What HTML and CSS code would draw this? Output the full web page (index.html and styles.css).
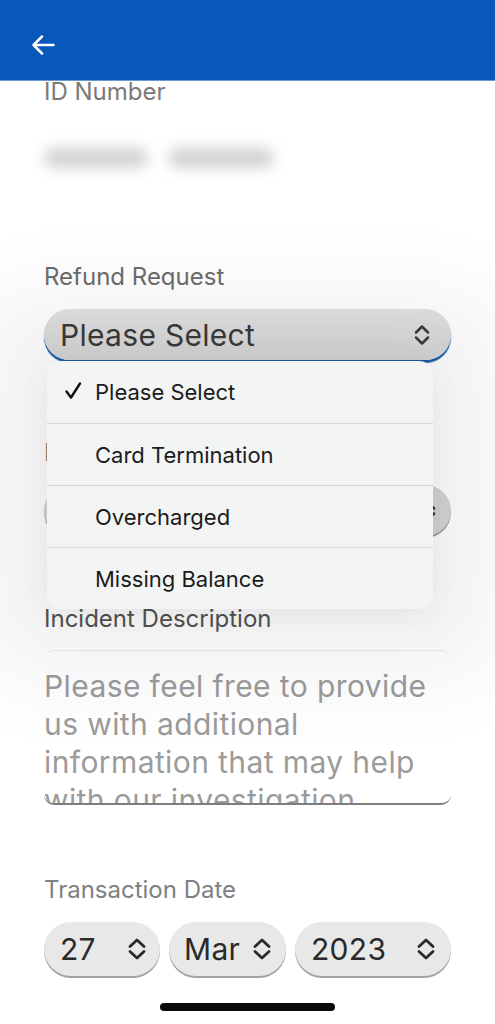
FILE: index.html
```html
<!doctype html>
<html>
<head>
<title>Refund Request</title>
<meta name="viewport" content="width=device-width, initial-scale=1">
<link rel="stylesheet" href="styles.css">
</head>
<body>
<header class="topbar">
	<button class="back" aria-label="Back">
		<svg width="26" height="26" viewBox="0 0 26 26"><path d="M23.5 13H3.5M12 4.5L3.5 13 12 21.5" fill="none" stroke="#fff" stroke-width="2.5" stroke-linecap="round" stroke-linejoin="round"/></svg>
	</button>
</header>

<main class="form">
	<div class="field field-id">
		<label class="label">ID Number</label>
		<div class="blurred"><span class="blob blob-a"></span><span class="blob blob-b"></span></div>
	</div>

	<div class="field field-refund">
		<label class="label">Refund Request</label>
		<div class="select select-wide select-focus">
			<span>Please Select</span>
			<svg class="chev" width="16" height="24" viewBox="0 0 16 24"><path d="M2 9.5L8 3.5l6 6M2 14.5l6 6 6-6" fill="none" stroke="#3a3a3a" stroke-width="2.5" stroke-linecap="round" stroke-linejoin="round"/></svg>
		</div>
		<ul class="menu">
			<li><svg class="tick" width="18" height="18" viewBox="0 0 18 18"><path d="M2.5 9.5L7 15.5 16 1.5" fill="none" stroke="#111" stroke-width="2.4" stroke-linecap="round" stroke-linejoin="round"/></svg>Please Select</li>
			<li>Card Termination</li>
			<li>Overcharged</li>
			<li>Missing Balance</li>
		</ul>
	</div>

	<div class="field field-hidden">
		<label class="label">Bank Account</label>
		<div class="select select-wide select-under">
			<span>Please Select</span>
			<svg class="chev" width="16" height="24" viewBox="0 0 16 24"><path d="M2 9.5L8 3.5l6 6M2 14.5l6 6 6-6" fill="none" stroke="#333" stroke-width="2.5" stroke-linecap="round" stroke-linejoin="round"/></svg>
		</div>
	</div>

	<div class="field field-desc">
		<label class="label">Incident Description</label>
		<div class="textarea">Please feel free to provide us with additional information that may help with our investigation</div>
	</div>

	<div class="field field-date">
		<label class="label">Transaction Date</label>
		<div class="date-row">
			<div class="select pill pill-day"><span>27</span><svg class="chev" width="20" height="24" viewBox="0 0 20 24"><path d="M3 9.5l7-6.5 7 6.5M3 14.5l7 6.5 7-6.5" fill="none" stroke="#2a2a2a" stroke-width="2.8" stroke-linecap="round" stroke-linejoin="round"/></svg></div>
			<div class="select pill pill-month"><span>Mar</span><svg class="chev" width="20" height="24" viewBox="0 0 20 24"><path d="M3 9.5l7-6.5 7 6.5M3 14.5l7 6.5 7-6.5" fill="none" stroke="#2a2a2a" stroke-width="2.8" stroke-linecap="round" stroke-linejoin="round"/></svg></div>
			<div class="select pill pill-year"><span>2023</span><svg class="chev" width="20" height="24" viewBox="0 0 20 24"><path d="M3 9.5l7-6.5 7 6.5M3 14.5l7 6.5 7-6.5" fill="none" stroke="#2a2a2a" stroke-width="2.8" stroke-linecap="round" stroke-linejoin="round"/></svg></div>
		</div>
	</div>
</main>

<div class="home-indicator"></div>
</body>
</html>
```

FILE: styles.css
```css
* {
  box-sizing: border-box;
}
html, body {
  margin: 0;
  padding: 0;
}
body {
  width: 495px;
  height: 1024px;
  overflow: hidden;
  background: #fff;
  font-family: Inter, "Liberation Sans", sans-serif;
  position: relative;
}
.topbar {
  height: 81px;
  background: #0758ba;
  display: flex;
  align-items: center;
  padding-left: 30px;
  border-bottom: 1px solid #6d99d2;
}
.back {
  background: none;
  border: 0;
  padding: 0;
  display: flex;
  margin-top: 10px;
}
.form {
  padding: 0 44px;
}
.field {
  position: relative;
}
.label {
  display: block;
  font-size: 24px;
  line-height: 30px;
  color: #7a7a7a;
}
.field-id {
  margin-top: -4px;
}
.blurred {
  margin-top: 41px;
  display: flex;
  gap: 20px;
  height: 24px;
}
.blob {
  display: block;
  height: 20px;
  border-radius: 10px;
  background: #d2d2d2;
  filter: blur(7px);
}
.blob-a {
  width: 104px;
}
.blob-b {
  width: 106px;
}
.field-refund {
  margin-top: 90px;
  z-index: 2;
}
.field-refund .label {
  color: #6c6c6c;
}
.select {
  display: flex;
  align-items: center;
  justify-content: space-between;
  height: 51px;
  border-radius: 26px;
  background: #e3e3e3;
  color: #3a3a3a;
  font-size: 30px;
  letter-spacing: 0.3px;
  padding: 0 21px 0 16px;
  box-shadow: 0 2px 0 #a2a2a2;
}
.select-wide {
  margin-top: 17px;
}
.select-focus {
  background: linear-gradient(#e2e2e2, #d5d5d5);
  box-shadow: 0 3px 1px #1e5cad;
}
.select-under {
  padding-right: 15px;
  background: #d6d6d6;
}
.menu {
  position: absolute;
  top: 99px;
  left: 3px;
  width: 386px;
  margin: 0;
  padding: 0;
  list-style: none;
  background: #f3f4f4;
  border-radius: 14px;
  box-shadow: 0 0 90px 70px rgba(0, 0, 0, 0.055), 0 6px 30px rgba(0, 0, 0, 0.06);
  overflow: hidden;
}
.menu li {
  position: relative;
  height: 62px;
  display: flex;
  align-items: center;
  padding-left: 48px;
  font-size: 22px;
  color: #1b1b1b;
  border-top: 1px solid #d7d7d7;
}
.menu li:first-child {
  border-top: 0;
}
.tick {
  position: absolute;
  left: 17px;
  top: 21px;
}
.field-hidden {
  margin-top: 78px;
}
.field-hidden .label {
  color: #777;
}
.field-desc {
  margin-top: 68px;
}
.field-desc .label {
  color: #535353;
}
.textarea {
  margin-top: 16px;
  height: 155px;
  overflow: hidden;
  border-radius: 10px;
  border-top: 1px solid #ececec;
  border-bottom: 2px solid #7d7d7d;
  padding-top: 16px;
  font-size: 30px;
  line-height: 38px;
  letter-spacing: 0.4px;
  color: #9b9b9b;
}
.field-date {
  margin-top: 70px;
}
.field-date .label {
  color: #808080;
}
.date-row {
  display: flex;
  gap: 9px;
  margin-top: 17px;
}
.pill {
  height: 54px;
  border-radius: 27px;
  background: #e8e8e8;
  color: #2a2a2a;
  padding: 0 13px 0 16px;
}
.pill-day {
  width: 116px;
}
.pill-month {
  width: 117px;
  padding: 0 14px 0 15px;
}
.pill-year {
  width: 156px;
  padding-right: 15px;
}
.home-indicator {
  position: absolute;
  left: 160px;
  bottom: 13px;
  width: 175px;
  height: 8px;
  border-radius: 4px;
  background: #0a0a0a;
}
```
